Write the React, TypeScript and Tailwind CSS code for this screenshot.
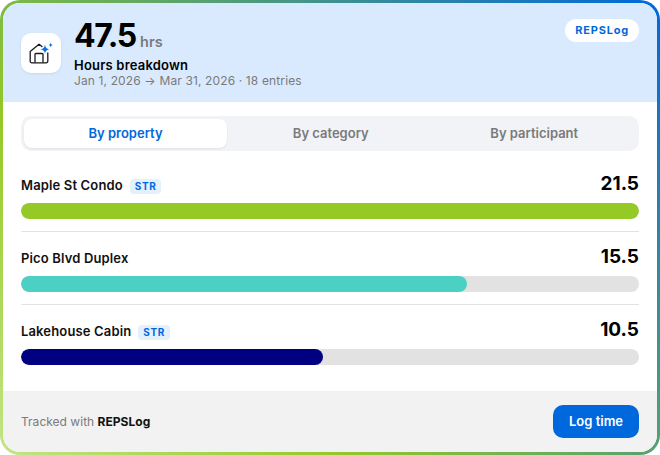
import { Fragment } from "react";

const rows = [
  { name: "Maple St Condo", str: true, hours: "21.5", bar: "w-full bg-[#95c926]" },
  { name: "Pico Blvd Duplex", str: false, hours: "15.5", bar: "w-[72.1%] bg-[#4dd0c4]" },
  { name: "Lakehouse Cabin", str: true, hours: "10.5", bar: "w-[48.9%] bg-[#000080]" },
];

function HouseIcon() {
  return (
    <svg width="24" height="24" viewBox="0 0 24 24" fill="none">
      <path
        d="M1.2 10.5 10 3.2 13 5.6M18.8 12v8.2a1.6 1.6 0 0 1-1.6 1.6H2.8a1.6 1.6 0 0 1-1.6-1.6v-9.7"
        stroke="#1a1a1a"
        strokeWidth="1.3"
        strokeLinecap="round"
        strokeLinejoin="round"
      />
      <path d="M6 21.8v-8.4a.9.9 0 0 1 .9-.9h6.2a.9.9 0 0 1 .9.9v8.4" stroke="#1a1a1a" strokeWidth="1.3" />
      <path d="M16 3.4c.5 3.2 1.5 4.3 4.9 4.9-3.4.6-4.4 1.6-4.9 4.9-.5-3.3-1.5-4.3-4.9-4.9 3.4-.6 4.4-1.7 4.9-4.9Z" fill="#0a6fe0" />
      <path d="M21.7 1.4c.3 1.7.7 2.2 2.3 2.5-1.6.3-2 .8-2.3 2.5-.3-1.7-.7-2.2-2.3-2.5 1.6-.3 2-.8 2.3-2.5Z" fill="#0a6fe0" />
    </svg>
  );
}

export default function App() {
  return (
    <div className="h-[455px] w-[660px] bg-white font-['Inter',sans-serif]">
      <div className="h-full w-full rounded-[20px] bg-[linear-gradient(225deg,#0068dd_0%,#95c926_70%,#c2e585_100%)] p-[3px]">
        <div className="flex h-full flex-col overflow-hidden rounded-[17px] bg-white">
          {/* Header */}
          <div className="flex h-[99px] shrink-0 items-start bg-[#d9eaff] pl-[18px] pr-[18px]">
            <div className="mt-[30px] flex h-10 w-10 items-center justify-center rounded-[10px] bg-white shadow-[0_1px_3px_rgba(0,0,0,0.08)]">
              <HouseIcon />
            </div>
            <div className="ml-[13px] mt-[15px] flex-1">
              <div className="flex items-baseline">
                <span className="text-[32px] font-bold leading-[36px] tracking-[-1.3px] text-black">47.5</span>
                <span className="ml-[4px] text-[14.5px] font-semibold text-[#7a7a7a]">hrs</span>
              </div>
              <div className="mt-[3px] text-[13px] font-semibold leading-[16px] tracking-[0.2px] text-black">
                Hours breakdown
              </div>
              <div className="text-xs leading-[15px] tracking-[0.13px] text-[#7a7a7a]">
                Jan 1, 2026 → Mar 31, 2026 · 18 entries
              </div>
            </div>
            <div className="mt-[16px] flex h-[23px] items-center rounded-full bg-white px-[10px] text-[11px] font-bold tracking-[0.8px] text-[#0068dd]">
              REPSLog
            </div>
          </div>

          {/* Body */}
          <div className="flex-1 px-[18px] pt-[14px]">
            <div className="flex h-[35px] rounded-[10px] bg-[#f2f3f6] p-[3px] text-[13px] font-semibold text-[#7a7a7a]">
              <div className="flex w-[203px] shrink-0 items-center justify-center rounded-lg bg-white text-[#0068dd] shadow-[0_1px_2px_rgba(0,0,0,0.08)]">
                By property
              </div>
              <div className="flex flex-1 items-center justify-center pl-[2px]">By category</div>
              <div className="flex flex-1 items-center justify-center">By participant</div>
            </div>

            <div className="mt-[21px]">
              {rows.map((row, i) => (
                <Fragment key={row.name}>
                  {i > 0 && <div className="mb-[13px] mt-[12px] h-px bg-[#e2e2e2]" />}
                  <div className="flex h-[26px] items-center justify-between">
                    <div className="mt-[2px] flex items-center gap-[7px]">
                      <span className="text-[13px] font-semibold tracking-[0.15px] text-[#111111]">{row.name}</span>
                      {row.str && (
                        <span className="flex h-[15px] items-center rounded bg-[#e5f0fd] px-[5px] text-[10px] font-bold tracking-[0.6px] text-[#0068dd]">
                          STR
                        </span>
                      )}
                    </div>
                    <span className="mb-[4px] text-[19px] font-bold leading-none text-black">{row.hours}</span>
                  </div>
                  <div className="mt-[5px] h-4 overflow-hidden rounded-full bg-[#e2e2e2]">
                    <div className={`h-full rounded-full ${row.bar}`} />
                  </div>
                </Fragment>
              ))}
            </div>
          </div>

          {/* Footer */}
          <div className="flex h-[61px] shrink-0 items-center justify-between bg-[#f2f2f2] px-[18px]">
            <div className="text-xs tracking-[0.02px] text-[#7a7a7a]">
              Tracked with <span className="font-bold text-[#111111]">REPSLog</span>
            </div>
            <button className="h-[33px] w-[86px] rounded-[10px] bg-[#0068dd] text-[13px] font-semibold text-white">
              Log time
            </button>
          </div>
        </div>
      </div>
    </div>
  );
}
